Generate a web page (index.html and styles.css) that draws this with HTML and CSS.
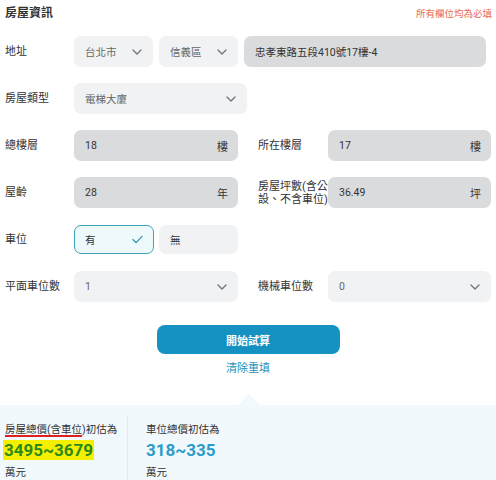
FILE: index.html
```html
<!DOCTYPE html>
<html lang="zh-Hant">
<head>
<meta charset="utf-8">
<link rel="stylesheet" href="styles.css">
</head>
<body>
<div class="form">
  <div class="head">
    <h2 class="title">房屋資訊</h2>
    <span class="req">所有欄位均為必填</span>
  </div>

  <div class="row">
    <label class="lbl">地址</label>
    <div class="sel w79"><span>台北市</span><svg class="chev" viewBox="0 0 10 6"><polyline points="1,1 5,5 9,1"/></svg></div>
    <div class="sel w79"><span>信義區</span><svg class="chev" viewBox="0 0 10 6"><polyline points="1,1 5,5 9,1"/></svg></div>
    <div class="inp addr"><span>忠孝東路五段410號17樓-4</span></div>
  </div>

  <div class="row">
    <label class="lbl">房屋類型</label>
    <div class="sel w173"><span>電梯大廈</span><svg class="chev" viewBox="0 0 10 6"><polyline points="1,1 5,5 9,1"/></svg></div>
  </div>

  <div class="row">
    <label class="lbl">總樓層</label>
    <div class="inp half"><span>18</span><span class="unit">樓</span></div>
    <label class="lbl lbl2">所在樓層</label>
    <div class="inp half2"><span>17</span><span class="unit">樓</span></div>
  </div>

  <div class="row">
    <label class="lbl">屋齡</label>
    <div class="inp half"><span>28</span><span class="unit">年</span></div>
    <label class="lbl lbl2 two">房屋坪數(含公<br>設、不含車位)</label>
    <div class="inp half2"><span>36.49</span><span class="unit">坪</span></div>
  </div>

  <div class="row">
    <label class="lbl">車位</label>
    <div class="opt on"><span>有</span><svg class="check" viewBox="0 0 12 10"><polyline points="1,5 4.5,8.5 11,1.5"/></svg></div>
    <div class="opt"><span>無</span></div>
  </div>

  <div class="row">
    <label class="lbl">平面車位數</label>
    <div class="sel half"><span>1</span><svg class="chev" viewBox="0 0 10 6"><polyline points="1,1 5,5 9,1"/></svg></div>
    <label class="lbl lbl2">機械車位數</label>
    <div class="sel half2"><span>0</span><svg class="chev" viewBox="0 0 10 6"><polyline points="1,1 5,5 9,1"/></svg></div>
  </div>

  <div class="actions">
    <button class="btn">開始試算</button>
    <a class="reset">清除重填</a>
  </div>
</div>

<div class="result">
  <div class="col">
    <div class="cap"><span class="ul">房屋總價(含車位</span>)初估為</div>
    <div class="num green"><span class="hl">3495~3679</span></div>
    <div class="unit2">萬元</div>
  </div>
  <div class="col col2">
    <div class="cap">車位總價初估為</div>
    <div class="num blue">318~335</div>
    <div class="unit2">萬元</div>
  </div>
</div>
</body>
</html>
```

FILE: styles.css
```css
* { box-sizing: border-box; }
html, body { margin: 0; padding: 0; background: #fff; }
html { height: 480px; overflow: hidden; }
body {
  width: 496px;
  height: 480px;
  overflow: hidden;
  font-family: Roboto, "Noto Sans CJK TC", sans-serif;
  color: #333;
  font-size: 11px;
}
.form { padding: 0 5px; }
.head {
  display: flex;
  justify-content: space-between;
  align-items: baseline;
  height: 36px;
  padding-top: 3px;
}
.title {
  margin: 0;
  font-size: 12px;
  font-weight: 700;
  color: #333;
}
.req {
  font-size: 9.5px;
  color: #e86a4e;
  margin-right: -1px;
}
.row {
  display: flex;
  align-items: center;
  height: 31px;
  margin-bottom: 16px;
}
.lbl {
  width: 69px;
  flex: none;
  font-size: 11px;
  color: #333;
  line-height: 13px;
}
.lbl2 { width: 70px; margin-left: 20px; }
.sel, .inp, .opt {
  height: 31px;
  border-radius: 7px;
  display: flex;
  align-items: center;
  justify-content: space-between;
  padding: 0 11px;
  font-size: 10.5px;
  flex: none;
}
.sel { background: #f1f2f3; color: #666; }
.inp { background: #dadbdd; color: #333; padding-right: 10px; }
.w79 { width: 79px; margin-right: 6px; }
.w173 { width: 173px; }
.addr { flex: 1; margin-right: 5px; }
.half { width: 164px; }
.half2 { width: 163px; }
.unit { font-size: 11px; color: #333; }
.chev {
  width: 10px;
  height: 6px;
  fill: none;
  stroke: #6f7479;
  stroke-width: 1.3;
  stroke-linecap: round;
  stroke-linejoin: round;
}
.opt {
  width: 79px;
  height: 29px;
  background: #f1f2f3;
  color: #333;
  margin-right: 5px;
}
.opt.on {
  width: 80px;
  background: #eef9fb;
  border: 1px solid #3ea3b6;
  padding: 0 10px;
}
.check {
  width: 11px;
  height: 9px;
  fill: none;
  stroke: #3a9db4;
  stroke-width: 1.5;
  stroke-linecap: round;
  stroke-linejoin: round;
}
.row:nth-child(7) { margin-bottom: 23px; }
.actions {
  display: flex;
  flex-direction: column;
  align-items: center;
}
.btn {
  width: 183px;
  height: 29px;
  border: none;
  border-radius: 8px;
  background: #1592c2;
  color: #fff;
  font-family: inherit;
  font-size: 11px;
  font-weight: 700;
  padding: 0;
}
.reset {
  margin-top: 8px;
  font-size: 11px;
  color: #2891b9;
  line-height: 14px;
}
.result {
  position: relative;
  margin-top: 29px;
  background: #f2f9fd;
  display: flex;
  padding: 17px 5px 0;
  height: 75px;
}
.result::before {
  content: "";
  position: absolute;
  left: 238px;
  top: -11px;
  border-left: 11px solid transparent;
  border-right: 11px solid transparent;
  border-bottom: 11px solid #f2f9fd;
}
.col { width: 122px; }
.col2 {
  border-left: 1px solid #e3e9ee;
  padding-left: 18px;
  width: auto;
  margin-top: -7px;
  padding-top: 7px;
}
.cap { font-size: 10.5px; color: #333; line-height: 15px; }
.ul {
  text-decoration: underline;
  text-decoration-color: #e02020;
  text-decoration-thickness: 1.5px;
  text-underline-offset: 2px;
}
.num {
  font-size: 17px;
  font-weight: 700;
  line-height: 20px;
  margin-top: 3px;
}
.green { color: #2c8a1c; }
.hl { background: #f4f000; padding: 0 1px; margin-left: -2px; }
.blue { color: #2d9bc9; }
.unit2 { font-size: 10.5px; color: #333; margin-top: 4px; }
```
